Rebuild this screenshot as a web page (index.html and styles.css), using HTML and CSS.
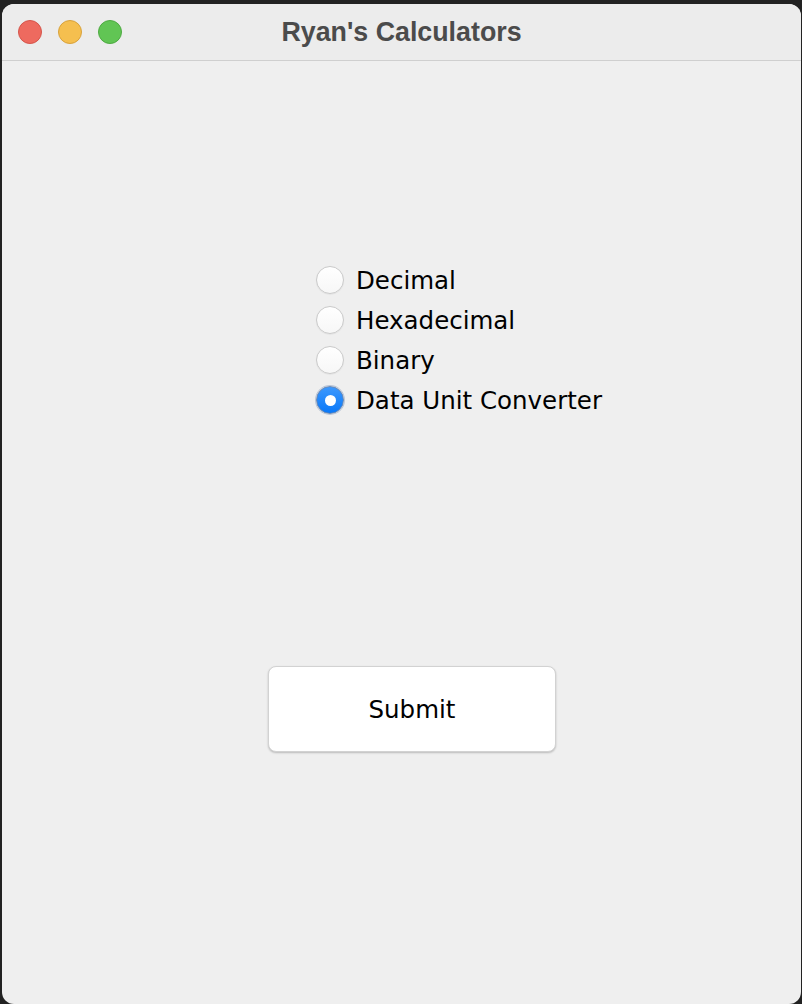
FILE: index.html
```html
<!DOCTYPE html>
<html>
<head>
<meta charset="utf-8">
<title>Ryan's Calculators</title>
<link rel="stylesheet" href="styles.css">
</head>
<body>
<div class="desk">
  <div class="window">
    <div class="titlebar">
      <div class="lights">
        <span class="light red"></span>
        <span class="light yellow"></span>
        <span class="light green"></span>
      </div>
      <div class="title">Ryan's Calculators</div>
    </div>
    <div class="content">
      <div class="options">
        <label class="option"><span class="radio"></span><span class="label">Decimal</span></label>
        <label class="option"><span class="radio"></span><span class="label">Hexadecimal</span></label>
        <label class="option"><span class="radio"></span><span class="label">Binary</span></label>
        <label class="option"><span class="radio checked"></span><span class="label">Data Unit Converter</span></label>
      </div>
      <button class="submit">Submit</button>
    </div>
  </div>
</div>
</body>
</html>
```

FILE: styles.css
```css
html, body {
  margin: 0;
  padding: 0;
  background: #222222;
  width: 802px;
  height: 1004px;
  overflow: hidden;
}
.desk {
  padding: 4px 0 0 2px;
}
.window {
  width: 799px;
  height: 1000px;
  background: #efefef;
  border-radius: 12px;
  overflow: hidden;
  display: flex;
  flex-direction: column;
}
.titlebar {
  height: 56px;
  flex: none;
  background: #ececec;
  border-bottom: 1px solid #cfcfcf;
  position: relative;
  display: flex;
  align-items: center;
  justify-content: center;
}
.lights {
  position: absolute;
  left: 16px;
  top: 16px;
  display: flex;
  gap: 16px;
}
.light {
  width: 22px;
  height: 22px;
  border-radius: 50%;
  border: 1px solid;
}
.red { background: #ee6a5f; border-color: #d5554b; }
.yellow { background: #f5bf4f; border-color: #d8a23c; }
.green { background: #61c554; border-color: #4eaa42; }
.title {
  font-family: "Liberation Sans", Arial, sans-serif;
  font-weight: bold;
  font-size: 26.8px;
  color: #4b4b4b;
}
.content {
  flex: 1;
  padding-top: 199px;
  display: flex;
  flex-direction: column;
  align-items: flex-start;
}
.options {
  margin-left: 314px;
  display: flex;
  flex-direction: column;
}
.option {
  height: 40px;
  display: flex;
  align-items: center;
  gap: 12px;
}
.radio {
  width: 26px;
  height: 26px;
  border-radius: 50%;
  border: 1px solid #cacaca;
  background: linear-gradient(#ffffff, #f7f7f7);
  box-shadow: 0 0.5px 1px rgba(0,0,0,0.08);
  position: relative;
  flex: none;
}
.radio.checked {
  border-color: #6a89b4;
  background: linear-gradient(#3c98fd, #0a78f8);
  box-shadow: 0 0 0 1px rgba(90,120,170,0.35);
}
.radio.checked::after {
  content: "";
  position: absolute;
  left: 7.5px;
  top: 7.5px;
  width: 11px;
  height: 11px;
  border-radius: 50%;
  background: #ffffff;
}
.label {
  font-family: "DejaVu Sans", sans-serif;
  font-size: 24.5px;
  color: #000000;
  line-height: 1;
  margin-top: 3px;
}
.submit {
  margin-top: 246px;
  margin-left: 266px;
  width: 288px;
  height: 86px;
  background: #ffffff;
  border: 0.5px solid #d2d2d2;
  border-radius: 8px;
  box-shadow: 0 1px 2px rgba(0,0,0,0.22);
  font-family: "DejaVu Sans", sans-serif;
  font-size: 24.5px;
  color: #000000;
  padding: 0;
}
```
